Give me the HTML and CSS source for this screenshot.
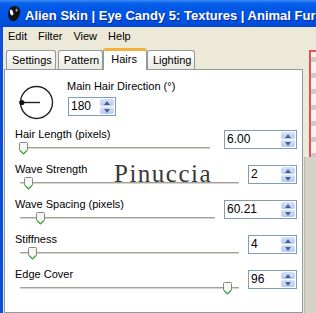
FILE: index.html
```html
<!DOCTYPE html>
<html>
<head>
    <title>Eye Candy 5: Textures - Animal Fur</title>
    <link rel="stylesheet" href="styles.css">
</head>
<body>
<div class="window">
    <div class="titlebar">
        <svg class="app-icon" width="14" height="17" viewBox="0 0 14 17">
            <path d="M7.5 1C11.5 1 13.6 4.2 13 8.2C12.4 12.3 9.2 16 6.2 16C3 16 1 13 1.2 9C1.5 4.2 3.8 1 7.5 1Z" fill="#111"/>
            <ellipse cx="4.6" cy="7.4" rx="1.6" ry="3.1" transform="rotate(-18 4.6 7.4)" fill="#fff"/>
            <ellipse cx="9.6" cy="5.2" rx="1" ry="1.6" fill="#9a9a9a"/>
        </svg>
        <span class="title">Alien Skin | Eye Candy 5: Textures | Animal Fur</span>
    </div>
    <div class="frame">
        <div class="menubar">
            <span>Edit</span>
            <span>Filter</span>
            <span>View</span>
            <span>Help</span>
        </div>
        <div class="workarea">
            <div class="dialog">
                <div class="tabs">
                    <div class="tab">Settings</div>
                    <div class="tab">Pattern</div>
                    <div class="tab active">Hairs</div>
                    <div class="tab">Lighting</div>
                </div>
                <div class="panel">
                    <div class="direction">
                        <svg class="dial" width="36" height="36" viewBox="0 0 36 36">
                            <circle cx="17.5" cy="17.5" r="16" fill="none" stroke="#222" stroke-width="1.4"/>
                            <line x1="2.5" y1="17.5" x2="21" y2="17.5" stroke="#222" stroke-width="1.4"/>
                            <circle cx="2.8" cy="17.5" r="2.6" fill="#111"/>
                        </svg>
                        <div>
                            <div class="label">Main Hair Direction (°)</div>
                            <div class="spin dir">
                                <span class="value">180</span>
                                <span class="arrows"><i class="arrow up"></i><i class="arrow down"></i></span>
                            </div>
                        </div>
                    </div>

                    <div class="params">
                        <div class="param">
                            <div class="param-main">
                                <div class="label">Hair Length (pixels)</div>
                                <div class="slider short"><div class="track"></div>
                                    <svg class="thumb" style="left:-1px" width="9" height="13" viewBox="0 0 9 13"><path d="M1.5 0.5h6a1 1 0 0 1 1 1v6.5l-4 4-4-4v-6.5a1 1 0 0 1 1-1z" fill="#f7f7f4" stroke="#868682"/><path d="M1.2 8.6l3.3 3.3 3.3-3.3" fill="none" stroke="#34a834" stroke-width="1.2"/></svg>
                                </div>
                            </div>
                            <div class="spin wide">
                                <span class="value">6.00</span>
                                <span class="arrows"><i class="arrow up"></i><i class="arrow down"></i></span>
                            </div>
                        </div>

                        <div class="param">
                            <div class="param-main">
                                <div class="label">Wave Strength</div>
                                <div class="slider"><div class="track"></div>
                                    <svg class="thumb" style="left:3.5px" width="9" height="13" viewBox="0 0 9 13"><path d="M1.5 0.5h6a1 1 0 0 1 1 1v6.5l-4 4-4-4v-6.5a1 1 0 0 1 1-1z" fill="#f7f7f4" stroke="#868682"/><path d="M1.2 8.6l3.3 3.3 3.3-3.3" fill="none" stroke="#34a834" stroke-width="1.2"/></svg>
                                </div>
                            </div>
                            <div class="spin">
                                <span class="value">2</span>
                                <span class="arrows"><i class="arrow up"></i><i class="arrow down"></i></span>
                            </div>
                        </div>

                        <div class="param">
                            <div class="param-main">
                                <div class="label">Wave Spacing (pixels)</div>
                                <div class="slider"><div class="track"></div>
                                    <svg class="thumb" style="left:15.5px" width="9" height="13" viewBox="0 0 9 13"><path d="M1.5 0.5h6a1 1 0 0 1 1 1v6.5l-4 4-4-4v-6.5a1 1 0 0 1 1-1z" fill="#f7f7f4" stroke="#868682"/><path d="M1.2 8.6l3.3 3.3 3.3-3.3" fill="none" stroke="#34a834" stroke-width="1.2"/></svg>
                                </div>
                            </div>
                            <div class="spin wide">
                                <span class="value">60.21</span>
                                <span class="arrows"><i class="arrow up"></i><i class="arrow down"></i></span>
                            </div>
                        </div>

                        <div class="param">
                            <div class="param-main">
                                <div class="label">Stiffness</div>
                                <div class="slider"><div class="track"></div>
                                    <svg class="thumb" style="left:7.5px" width="9" height="13" viewBox="0 0 9 13"><path d="M1.5 0.5h6a1 1 0 0 1 1 1v6.5l-4 4-4-4v-6.5a1 1 0 0 1 1-1z" fill="#f7f7f4" stroke="#868682"/><path d="M1.2 8.6l3.3 3.3 3.3-3.3" fill="none" stroke="#34a834" stroke-width="1.2"/></svg>
                                </div>
                            </div>
                            <div class="spin">
                                <span class="value">4</span>
                                <span class="arrows"><i class="arrow up"></i><i class="arrow down"></i></span>
                            </div>
                        </div>

                        <div class="param">
                            <div class="param-main">
                                <div class="label">Edge Cover</div>
                                <div class="slider"><div class="track"></div>
                                    <svg class="thumb" style="left:203px" width="9" height="13" viewBox="0 0 9 13"><path d="M1.5 0.5h6a1 1 0 0 1 1 1v6.5l-4 4-4-4v-6.5a1 1 0 0 1 1-1z" fill="#f7f7f4" stroke="#868682"/><path d="M1.2 8.6l3.3 3.3 3.3-3.3" fill="none" stroke="#34a834" stroke-width="1.2"/></svg>
                                </div>
                            </div>
                            <div class="spin">
                                <span class="value">96</span>
                                <span class="arrows"><i class="arrow up"></i><i class="arrow down"></i></span>
                            </div>
                        </div>
                    </div>
                </div>
            </div>
            <div class="side">
                <div class="preview"></div>
                <div class="scroll"></div>
            </div>
        </div>
    </div>
    <div class="watermark">Pinuccia</div>
</div>
</body>
</html>
```

FILE: styles.css
```css
body {
    margin: 0;
    font-family: "Liberation Sans", Arial, sans-serif;
    font-size: 11px;
    color: #000;
    background-color: #ece9d8;
    overflow: hidden;
}
.window {
    position: relative;
    width: 316px;
    height: 313px;
    overflow: hidden;
}

/* title bar */
.titlebar {
    height: 27px;
    display: flex;
    align-items: center;
    background: linear-gradient(#3b8cf6 0, #0a62e9 3px, #0056e6 9px, #0054e3 60%, #004ad6 100%);
    color: #fff;
    white-space: nowrap;
}
.app-icon {
    flex: none;
    margin-left: 7px;
    margin-right: 4px;
}
.title {
    font-weight: bold;
    font-size: 13px;
    padding-top: 3px;
    text-shadow: 1px 1px #0c2a9a;
}

.frame {
    height: 286px;
    display: flex;
    flex-direction: column;
    border-left: 3px solid #0b4fdc;
}
.menubar {
    height: 18px;
    line-height: 18px;
    display: flex;
    gap: 11px;
    padding-left: 5px;
    flex: none;
}
.workarea {
    flex: 1;
    display: flex;
    min-height: 0;
}

/* tabs + panel */
.dialog {
    width: 299px;
    margin-left: 1px;
    display: flex;
    flex-direction: column;
}
.tabs {
    height: 24px;
    display: flex;
    align-items: flex-end;
    gap: 2px;
    padding-left: 2px;
    flex: none;
}
.tab {
    border: 1px solid #919b9c;
    border-bottom: 0;
    border-radius: 3px 3px 0 0;
    padding: 0 3px 0 5px;
    line-height: 18px;
    background: linear-gradient(#fefefe, #f4f3ee 60%, #eae8df);
}
.tab.active {
    position: relative;
    z-index: 1;
    background: #fff;
    border-top: 3px solid #f2b13f;
    line-height: 16px;
    padding: 0 9px 3px 7px;
    margin: 0 -2px -1px;
}
.panel {
    flex: 1;
    background: #fff;
    border: 1px solid #919b9c;
}

.direction {
    display: flex;
    padding: 10px 0 0 14px;
}
.dial {
    margin-top: 5px;
    margin-right: 12px;
}
.label {
    line-height: 13px;
    white-space: nowrap;
}
.spin.dir {
    width: 48px;
    margin-top: 4px;
    margin-left: 1px;
}

.params {
    padding: 7px 5px 0 10px;
}
.param {
    display: flex;
    align-items: flex-start;
    height: 35px;
}
.param-main {
    flex: 1;
    margin-right: 9px;
}
.slider {
    position: relative;
    height: 14px;
    margin-left: 5px;
}
.slider.short {
    margin-right: 5px;
}
.track {
    position: absolute;
    left: 0;
    right: 0;
    top: 6px;
    height: 1px;
    border-top: 1px solid #a3a196;
    border-bottom: 1px solid #fdfdfb;
    background: #d8d6cc;
    border-radius: 1px;
}
.thumb {
    position: absolute;
    top: 1px;
}

/* spin boxes */
.spin {
    display: flex;
    width: 49px;
    height: 19px;
    margin-top: 2px;
    box-sizing: border-box;
    border: 1px solid #7f9db9;
    background: #fff;
    flex: none;
}
.spin.wide {
    width: 73px;
}
.spin .value {
    flex: 1;
    font-size: 12px;
    line-height: 17px;
    padding-left: 2px;
}
.arrows {
    width: 15px;
    display: flex;
    flex-direction: column;
    gap: 1px;
    padding: 1px 1px 1px 0;
    box-sizing: border-box;
}
.arrow {
    flex: 1;
    display: flex;
    align-items: center;
    justify-content: center;
    border-radius: 2px;
    background: linear-gradient(#d6e2fb, #b7caf5);
}
.arrow::after {
    content: "";
    border-left: 3.5px solid transparent;
    border-right: 3.5px solid transparent;
}
.arrow.up::after {
    border-bottom: 4px solid #4d6185;
}
.arrow.down::after {
    border-top: 4px solid #4d6185;
}

/* right strip */
.side {
    flex: 1;
    display: flex;
    flex-direction: column;
}
.preview {
    height: 105px;
    margin: 5px 0 0 6px;
    border-left: 2px solid #f24d4d;
    border-top: 2px solid #f24d4d;
    background: repeating-linear-gradient(#f3f3f3 0, #f3f3f3 5px, #cacaca 5px, #cacaca 10px, #f3f3f3 10px, #f3f3f3 16px);
}
.scroll {
    flex: 1;
    margin-left: 1px;
    background: #d5d2ca;
    border-left: 1px solid #bab7af;
}

.watermark {
    position: absolute;
    left: 114px;
    top: 161px;
    font-family: "Liberation Serif", "Times New Roman", serif;
    font-size: 25px;
    line-height: 25px;
    letter-spacing: 1.5px;
    color: #383838;
}
```
